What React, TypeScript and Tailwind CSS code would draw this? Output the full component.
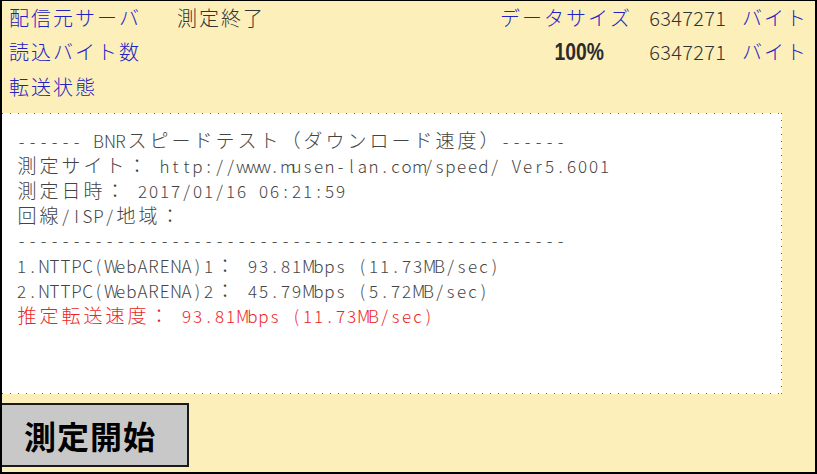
import React from "react";

const isWide = (c: string) =>
  /[\u3000-\u30ff\u3400-\u9fff\uff01-\uff60\uffe0-\uffe6]/.test(c);

function Mono({
  text,
  className = "",
  big = false,
}: {
  text: string;
  className?: string;
  big?: boolean;
}) {
  return (
    <span className={"whitespace-pre " + className}>
      {Array.from(text).map((c, i) => (
        <span
          key={i}
          className={
            isWide(c)
              ? big
                ? "inline-block w-[22px] text-center text-[19px]"
                : "inline-block w-[22px] text-center"
              : "inline-block w-[11px] text-center"
          }
        >
          {c === " " ? "\u00a0" : c}
        </span>
      ))}
    </span>
  );
}

const lines: { t: string; red?: boolean }[] = [
  { t: "------ BNRスピードテスト（ダウンロード速度）------" },
  { t: "測定サイト： http://www.musen-lan.com/speed/ Ver5.6001" },
  { t: "測定日時： 2017/01/16 06:21:59" },
  { t: "回線/ISP/地域：" },
  { t: "--------------------------------------------------" },
  { t: "1.NTTPC(WebARENA)1： 93.81Mbps (11.73MB/sec)" },
  { t: "2.NTTPC(WebARENA)2： 45.79Mbps (5.72MB/sec)" },
  { t: "推定転送速度： 93.81Mbps (11.73MB/sec)", red: true },
];

export default function App() {
  return (
    <div className="w-[817px] h-[474px] bg-[#fdefba] border-2 border-t border-black flex flex-col font-['Noto_Sans_CJK_JP','Noto_Sans',sans-serif] overflow-hidden">
      {/* header rows */}
      <div className="flex flex-col text-[20px] leading-none font-light">
        <div className="h-[34px] flex items-center pl-[6px] pr-[8px]">
          <Mono text="配信元サーバ" className="text-[#2222c4] w-[168px]" />
          <Mono text="測定終了" className="text-[#333333]" />
          <div className="ml-auto flex items-center">
            <div className="w-[132px] flex justify-end">
              <Mono text="データサイズ" className="text-[#2222c4]" />
            </div>
            <Mono text="6347271" className="ml-[18px] text-[#333333]" />
            <Mono text="バイト" className="ml-[15px] text-[#2222c4]" />
          </div>
        </div>
        <div className="h-[34px] flex items-center pl-[6px] pr-[8px]">
          <Mono text="読込バイト数" className="text-[#2222c4]" />
          <div className="ml-auto flex items-center">
            <div className="w-[132px] flex justify-end pr-[27px]">
              <span className="inline-block font-['Liberation_Sans',sans-serif] font-bold text-[23px] text-[#2b2b2b] scale-x-[0.84] origin-right">
                100%
              </span>
            </div>
            <Mono text="6347271" className="ml-[18px] text-[#333333]" />
            <Mono text="バイト" className="ml-[15px] text-[#2222c4]" />
          </div>
        </div>
        <div className="h-[36px] flex items-center pl-[6px]">
          <Mono text="転送状態" className="text-[#2222c4]" />
        </div>
      </div>

      {/* output box */}
      <div className="mt-[8px] w-[780px] h-[281px] bg-white bg-no-repeat [background-image:repeating-linear-gradient(90deg,#666666_0_1px,transparent_1px_8px),repeating-linear-gradient(90deg,#666666_0_1px,transparent_1px_8px),repeating-linear-gradient(180deg,#666666_0_1px,transparent_1px_7px)] [background-size:100%_1px,100%_1px,1px_100%] [background-position:left_top,left_bottom,right_top] pt-[14px] pl-[14px] text-[17px] leading-[25px] font-light">
        {lines.map((l, i) => (
          <div
            key={i}
            className={
              l.red
                ? "h-[25px] overflow-visible text-[#ee2424]"
                : "h-[25px] overflow-visible text-[#444444]"
            }
          >
            <Mono text={l.t} big />
          </div>
        ))}
      </div>

      {/* button */}
      <div className="mt-[9px] w-[187px] h-[64px] bg-[#c8c8c8] border-2 border-l-0 border-[#1a1a1a] flex items-center pl-[22px]">
        <span className="text-[32px] font-bold text-black tracking-[1px] leading-none">
          測定開始
        </span>
      </div>
    </div>
  );
}
